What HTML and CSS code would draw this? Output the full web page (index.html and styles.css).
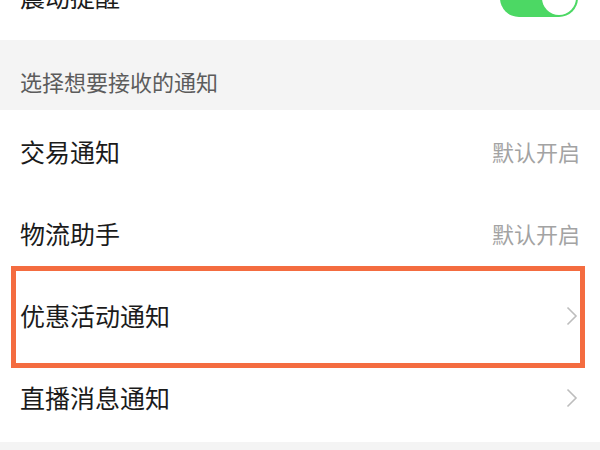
FILE: index.html
```html
<!DOCTYPE html>
<html lang="zh-CN">
<head>
    <meta charset="utf-8">
    <title>消息通知设置</title>
    <link rel="stylesheet" href="styles.css">
</head>
<body>

<div class="settings">
    <div class="row row-top">
        <span class="row-title">震动提醒</span>
        <span class="switch on"></span>
    </div>

    <div class="section-header">选择想要接收的通知</div>

    <div class="list">
        <div class="row">
            <span class="row-title">交易通知</span>
            <span class="row-value">默认开启</span>
        </div>
        <div class="row">
            <span class="row-title">物流助手</span>
            <span class="row-value">默认开启</span>
        </div>
        <div class="row highlighted">
            <span class="row-title">优惠活动通知</span>
            <svg class="chevron" width="12" height="20" viewBox="0 0 12 20">
                <polyline points="1.5,1.5 10,10 1.5,18.5" fill="none" stroke="#bdbdbd" stroke-width="1.6"/>
            </svg>
        </div>
        <div class="row">
            <span class="row-title">直播消息通知</span>
            <svg class="chevron" width="12" height="20" viewBox="0 0 12 20">
                <polyline points="1.5,1.5 10,10 1.5,18.5" fill="none" stroke="#bdbdbd" stroke-width="1.6"/>
            </svg>
        </div>
    </div>
</div>

</body>
</html>
```

FILE: styles.css
```css
:root {
    --page-gray: #f4f4f4;
    --text-color: #1b1b1b;
    --muted-color: #a3a3a3;
    --header-color: #5c5c5c;
    --accent-orange: #f46c40;
    --switch-green: #4cd864;
}

html, body {
    margin: 0;
    padding: 0;
}

body {
    background-color: var(--page-gray);
    font-family: "Noto Sans CJK SC", "Noto Sans", sans-serif;
    color: var(--text-color);
    overflow: hidden;
}

.settings {
    width: 600px;
}

.row {
    position: relative;
    height: 82px;
    padding: 0 20px;
    display: flex;
    align-items: center;
    justify-content: space-between;
    background-color: #fff;
    box-sizing: border-box;
}

/* the switch row is scrolled partly off the top */
.row-top {
    height: 88px;
    margin-top: -48px;
    padding-right: 22px;
}

.row-title {
    font-size: 25px;
    letter-spacing: 0;
}

.row-value {
    font-size: 22px;
    color: var(--muted-color);
}

.chevron {
    margin-right: 2px;
    margin-top: 2px;
}

.switch {
    position: relative;
    width: 78px;
    height: 38px;
    margin-top: 4px;
    border-radius: 19px;
    background-color: var(--switch-green);
}

.switch::after {
    content: '';
    position: absolute;
    top: 2px;
    right: 2px;
    width: 34px;
    height: 34px;
    border-radius: 50%;
    background-color: #fff;
}

.section-header {
    height: 70px;
    padding: 12px 20px 0;
    box-sizing: border-box;
    display: flex;
    align-items: center;
    font-size: 22px;
    color: var(--header-color);
    background-color: var(--page-gray);
}

.list {
    background-color: #fff;
    padding-bottom: 4px;
}

/* orange marker drawn over the row */
.highlighted {
    z-index: 1;
}

.highlighted::after {
    content: '';
    position: absolute;
    top: -8px;
    bottom: -12px;
    left: 11px;
    right: 15px;
    border: 5px solid var(--accent-orange);
}
```
